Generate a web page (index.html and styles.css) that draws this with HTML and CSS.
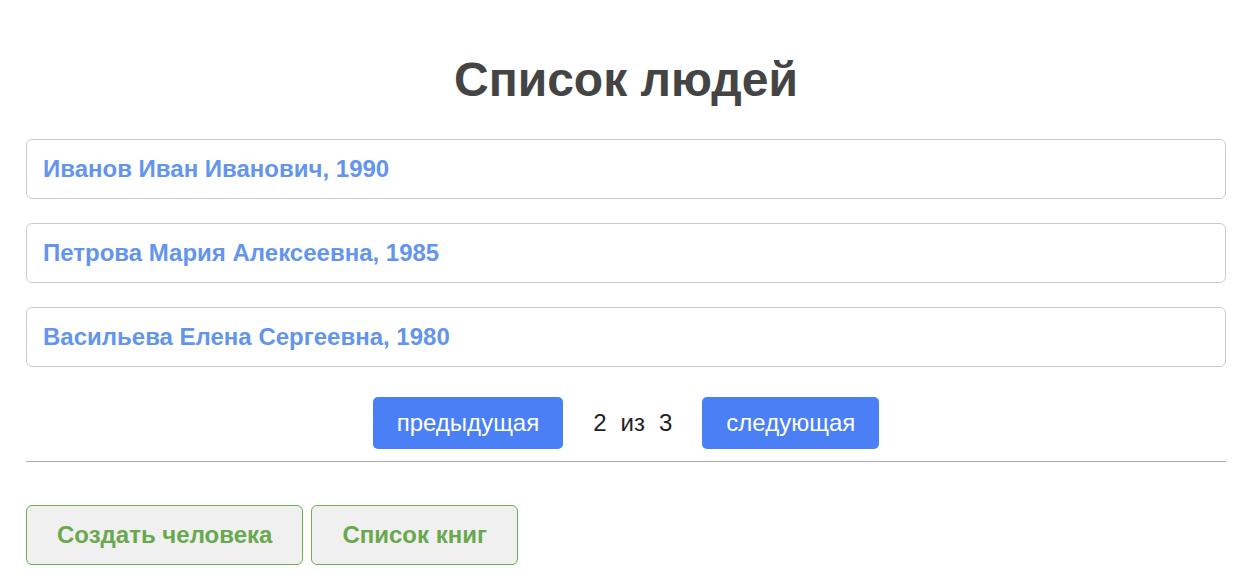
FILE: index.html
```html
<!DOCTYPE html>
<html lang="ru">
<head>
<meta charset="utf-8">
<title>Список людей</title>
<link rel="stylesheet" href="styles.css">
</head>
<body>
<div class="container">
  <h1 class="title">Список людей</h1>
  <ul class="people">
    <li class="person"><a class="person-link" href="#">Иванов Иван Иванович, 1990</a></li>
    <li class="person"><a class="person-link" href="#">Петрова Мария Алексеевна, 1985</a></li>
    <li class="person"><a class="person-link" href="#">Васильева Елена Сергеевна, 1980</a></li>
  </ul>
  <div class="pager">
    <button class="pager-btn">предыдущая</button>
    <span class="pager-info"><span>2</span><span>из</span><span>3</span></span>
    <button class="pager-btn">следующая</button>
  </div>
  <hr class="divider">
  <div class="actions">
    <a class="action-btn" href="#">Создать человека</a>
    <a class="action-btn" href="#">Список книг</a>
  </div>
</div>
</body>
</html>
```
FILE: styles.css
```css
* { box-sizing: border-box; }
body {
  margin: 0;
  font-family: "Liberation Sans", Arial, sans-serif;
  background: #fff;
  color: #333;
}
.container {
  max-width: 1200px;
  margin: 0 auto;
}
.title {
  margin: 0;
  padding-top: 52px;
  height: 139px;
  text-align: center;
  font-size: 48px;
  line-height: 56px;
  font-weight: bold;
  color: #444;
}
.people {
  list-style: none;
  margin: 0;
  padding: 0;
  display: flex;
  flex-direction: column;
  gap: 24px;
}
.person {
  height: 60px;
  border: 1px solid #ccc;
  border-radius: 6px;
  display: flex;
  align-items: center;
  padding: 0 16px;
}
.person-link {
  color: #6495ed;
  font-weight: bold;
  font-size: 24px;
  text-decoration: none;
}
.pager {
  display: flex;
  justify-content: center;
  align-items: center;
  margin-top: 30px;
  gap: 30px;
}
.pager-btn {
  height: 52px;
  padding: 0 24px;
  border: none;
  border-radius: 5px;
  background: #4a7ff5;
  color: #fff;
  font-family: "Liberation Sans", Arial, sans-serif;
  font-size: 24px;
}
.pager-info {
  display: flex;
  gap: 14px;
  font-size: 24px;
  color: #222;
}
.divider {
  margin: 12px 0 0;
  border: none;
  border-top: 1px solid #aaa;
}
.actions {
  display: flex;
  gap: 8px;
  margin-top: 43px;
}
.action-btn {
  height: 60px;
  display: flex;
  align-items: center;
  padding: 0 30px;
  background: #f0f0f0;
  border: 1px solid #6ab04c;
  border-radius: 6px;
  color: #6aa84f;
  font-weight: bold;
  font-size: 24px;
  text-decoration: none;
}
```
